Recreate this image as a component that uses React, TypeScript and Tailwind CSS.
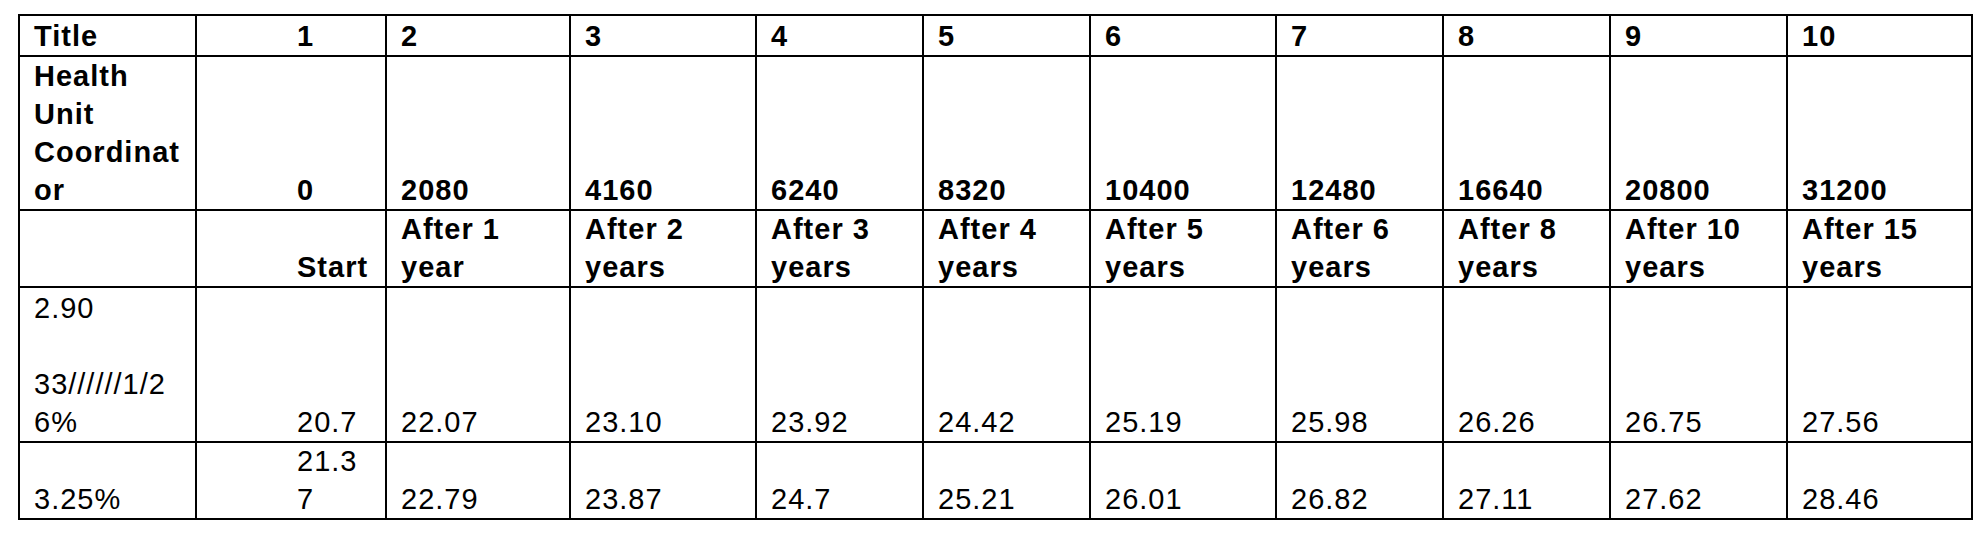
import React from "react";

type Cell = string | string[];

const rows: { bold: boolean; cells: Cell[] }[] = [
  {
    bold: true,
    cells: ["Title", "1", "2", "3", "4", "5", "6", "7", "8", "9", "10"],
  },
  {
    bold: true,
    cells: [
      ["Health", "Unit", "Coordinat", "or"],
      "0",
      "2080",
      "4160",
      "6240",
      "8320",
      "10400",
      "12480",
      "16640",
      "20800",
      "31200",
    ],
  },
  {
    bold: true,
    cells: [
      "",
      "Start",
      ["After 1", "year"],
      ["After 2", "years"],
      ["After 3", "years"],
      ["After 4", "years"],
      ["After 5", "years"],
      ["After 6", "years"],
      ["After 8", "years"],
      ["After 10", "years"],
      ["After 15", "years"],
    ],
  },
  {
    bold: false,
    cells: [
      ["2.90", "\u00a0", "33//////1/2", "6%"],
      "20.7",
      "22.07",
      "23.10",
      "23.92",
      "24.42",
      "25.19",
      "25.98",
      "26.26",
      "26.75",
      "27.56",
    ],
  },
  {
    bold: false,
    cells: [
      "3.25%",
      ["21.3", "7"],
      "22.79",
      "23.87",
      "24.7",
      "25.21",
      "26.01",
      "26.82",
      "27.11",
      "27.62",
      "28.46",
    ],
  },
];

export default function App() {
  return (
    <div className="min-h-[538px] bg-white pt-[14px] pl-[18px] font-['Liberation_Sans',Arial,sans-serif] text-black">
      <div className="grid w-fit grid-cols-[175px_188px_182px_184px_165px_165px_184px_165px_165px_175px_183px] grid-rows-[39px_152px_75px_153px_75px] gap-[2px] bg-black p-[2px]">
        {rows.map((row, ri) =>
          row.cells.map((cell, ci) => {
            const lines = Array.isArray(cell) ? cell : [cell];
            return (
              <div
                key={`${ri}-${ci}`}
                className={`flex flex-col justify-end overflow-hidden bg-white text-[29px] leading-[38px] tracking-[1px] whitespace-pre ${
                  row.bold ? "font-bold" : "font-normal"
                } ${ci === 1 ? "pl-[100px]" : "pl-[14px]"}`}
              >
                {lines.map((l, li) => (
                  <div key={li}>{l}</div>
                ))}
              </div>
            );
          })
        )}
      </div>
    </div>
  );
}
